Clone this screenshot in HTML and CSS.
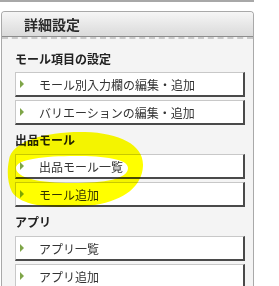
FILE: index.html
```html
<!DOCTYPE html>
<html lang="ja">
<head>
<meta charset="utf-8">
<link rel="stylesheet" href="styles.css">
</head>
<body>
<div class="topline"></div>
<div class="panel">
  <div class="panel-head">詳細設定</div>
  <div class="panel-body">
    <h3 class="sec first">モール項目の設定</h3>
    <a class="btn"><span class="tri"></span>モール別入力欄の編集・追加</a>
    <a class="btn"><span class="tri"></span>バリエーションの編集・追加</a>
    <h3 class="sec">出品モール</h3>
    <a class="btn"><span class="tri"></span>出品モール一覧</a>
    <a class="btn"><span class="tri"></span>モール追加</a>
    <h3 class="sec">アプリ</h3>
    <a class="btn"><span class="tri"></span>アプリ一覧</a>
    <a class="btn"><span class="tri"></span>アプリ追加</a>
  </div>
</div>
<svg class="marker" width="279" height="286" viewBox="0 0 279 286">
  <path fill="#ffff00" fill-rule="evenodd" d="M9 160 C 11 140, 50 131, 85 132 C 120 133, 144 145, 143 166 C 142 186, 125 200, 95 205 C 60 209, 22 208, 12 192 C 7 182, 7 170, 9 160 Z M 16 168 C 16 159, 45 156, 75 156 C 105 156, 128 159, 128 168 C 128 179, 105 183, 72 183 C 40 183, 16 178, 16 168 Z"/>
</svg>
</body>
</html>
```
FILE: styles.css
```css
html, body {
  margin: 0;
  padding: 0;
  background: #ffffff;
}
body {
  width: 279px;
  height: 286px;
  overflow: hidden;
  position: relative;
  font-family: "Noto Sans CJK JP", "Noto Sans", sans-serif;
  color: #222;
}
.topline {
  width: 254px;
  height: 2px;
  background: #a8a8a8;
}
.panel {
  margin: 9px 0 0 1px;
  width: 251px;
  border: 1px solid #a9a9a9;
  border-bottom: none;
  border-radius: 4px 4px 0 0;
  background: #f4f4f4;
}
.panel-head {
  height: 24px;
  line-height: 24px;
  padding-left: 22px;
  font-size: 14px;
  font-weight: bold;
  color: #2a2a2a;
  border-radius: 3px 3px 0 0;
  background: linear-gradient(#f6f6f6, #dadada);
  border-bottom: 1px solid #8c8c8c;
}
.panel-body {
  border-top: 2px dashed #c9c9c9;
  padding: 0 8px 20px 13px;
}
.sec {
  margin: 5px 0 4px;
  height: 20px;
  line-height: 20px;
  font-size: 12px;
  font-weight: bold;
  color: #222;
}
.sec.first {
  margin-top: 10px;
  margin-bottom: 3px;
}
.btn {
  display: flex;
  align-items: center;
  box-sizing: border-box;
  height: 25px;
  margin-bottom: 3px;
  background: #fff;
  border: 1px solid #c8c8c8;
  border-right: 2px solid #4a4a4a;
  border-bottom: 2px solid #4a4a4a;
  font-size: 12px;
  color: #333;
  padding-left: 4px;
}
.tri {
  width: 0;
  height: 0;
  border-top: 4px solid transparent;
  border-bottom: 4px solid transparent;
  border-left: 4px solid #7ea548;
  margin-right: 15px;
}
.marker {
  position: absolute;
  left: 0;
  top: 0;
  mix-blend-mode: multiply;
  pointer-events: none;
}
```
